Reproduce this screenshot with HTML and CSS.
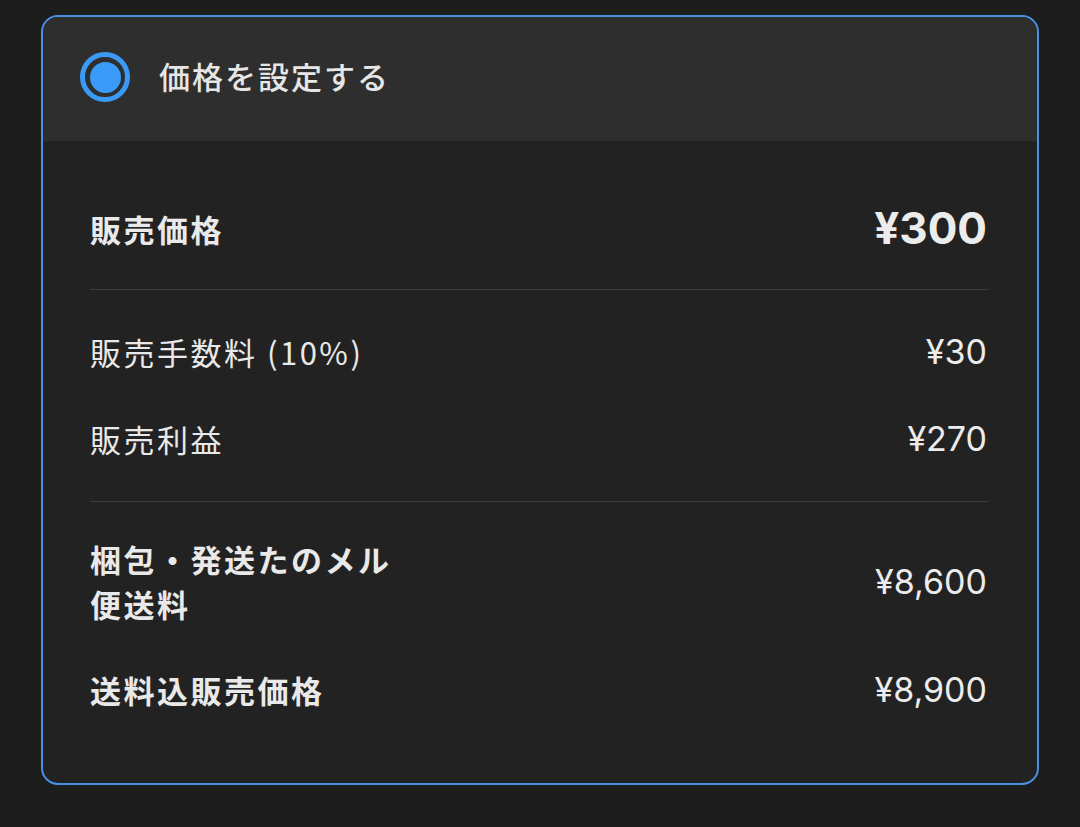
FILE: index.html
```html
<!DOCTYPE html>
<html lang="ja">
<head>
<meta charset="utf-8">
<link rel="stylesheet" href="styles.css">
</head>
<body>
<div class="card">
  <div class="card-head">
    <span class="radio"><span class="radio-dot"></span></span>
    <span class="head-title">価格を設定する</span>
  </div>
  <div class="card-body">
    <div class="section section-main">
      <div class="row">
        <span class="label bold">販売価格</span>
        <span class="amount big">¥300</span>
      </div>
    </div>
    <div class="section section-fees">
      <div class="row">
        <span class="label">販売手数料 (10%)</span>
        <span class="amount">¥30</span>
      </div>
      <div class="row">
        <span class="label">販売利益</span>
        <span class="amount">¥270</span>
      </div>
    </div>
    <div class="section section-ship">
      <div class="row">
        <span class="label bold narrow">梱包・発送たのメル便送料</span>
        <span class="amount">¥8,600</span>
      </div>
      <div class="row">
        <span class="label bold">送料込販売価格</span>
        <span class="amount">¥8,900</span>
      </div>
    </div>
  </div>
</div>
</body>
</html>
```
FILE: styles.css
```css
html, body {
  margin: 0;
  padding: 0;
  background: #1d1d1d;
}
body {
  padding: 15px 41px 0 41px;
  height: 827px;
  box-sizing: border-box;
  font-family: "Noto Sans CJK JP", "Noto Sans", sans-serif;
  color: #e9e9e9;
}
.card {
  border: 2px solid #4a90e0;
  border-radius: 17px;
  overflow: hidden;
  background: #222222;
  height: 770px;
  box-sizing: border-box;
  display: flex;
  flex-direction: column;
}
.card-head {
  height: 124px;
  box-sizing: border-box;
  padding-bottom: 4px;
  background: #2e2e2e;
  display: flex;
  align-items: center;
  padding-left: 37px;
  gap: 29px;
  flex: none;
}
.radio {
  width: 50px;
  height: 50px;
  box-sizing: border-box;
  border: 5px solid #3a9af5;
  border-radius: 50%;
  display: flex;
  align-items: center;
  justify-content: center;
}
.radio-dot {
  width: 31px;
  height: 31px;
  border-radius: 50%;
  background: #3a9cf8;
}
.head-title {
  font-size: 31px;
  font-weight: 500;
  letter-spacing: 2px;
  color: #e6e6e6;
  margin-bottom: 4px;
}
.card-body {
  padding: 0 48px 0 47px;
}
.section {
  display: flex;
  flex-direction: column;
  gap: 42px;
  border-bottom: 1px solid #3c3c3c;
}
.section:last-child {
  border-bottom: none;
}
.section-main {
  padding: 57px 0 31px;
}
.section-fees {
  padding: 39px 0 40px;
}
.section-ship {
  padding: 34px 0 0;
  gap: 41px;
}
.row {
  display: flex;
  justify-content: space-between;
  align-items: center;
  min-height: 44px;
}
.section-main .row {
  min-height: 60px;
}
.label {
  font-size: 31px;
  line-height: 45px;
  letter-spacing: 2.5px;
  font-weight: 400;
}
.label.bold {
  font-weight: 700;
}
.label.narrow {
  max-width: 320px;
}
.amount {
  font-family: "Inter", "Liberation Sans", sans-serif;
  font-size: 34px;
  font-weight: 400;
  color: #ececec;
  margin-right: 2px;
}
.amount.big {
  font-size: 44px;
  font-weight: 700;
}
```
